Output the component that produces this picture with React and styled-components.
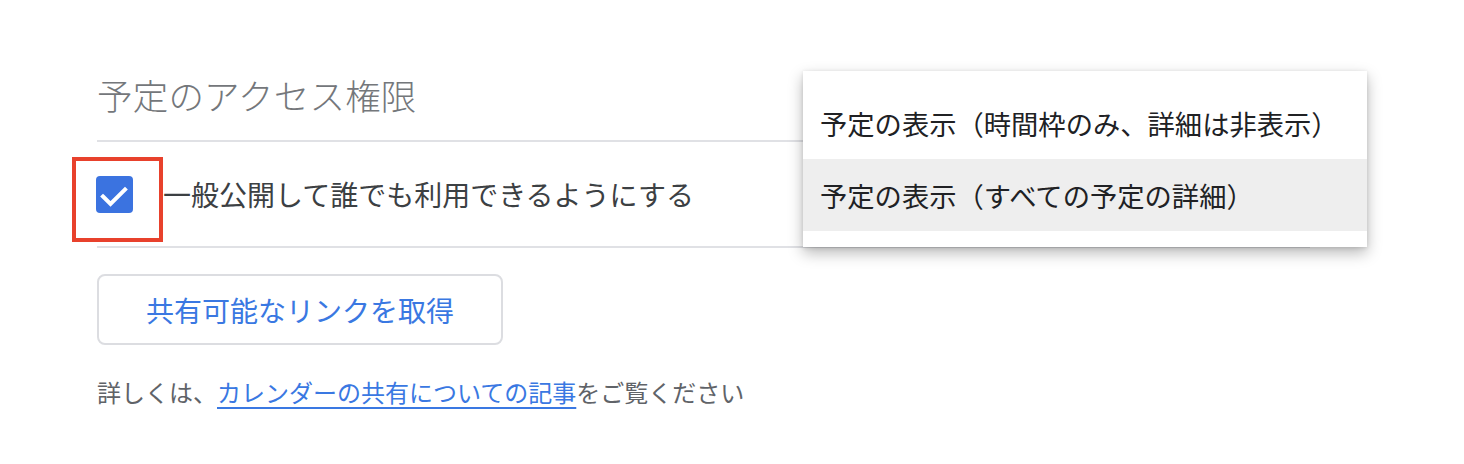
import styled, { createGlobalStyle } from "styled-components";

const GlobalStyle = createGlobalStyle`
    html, body {
        margin: 0;
        background: #ffffff;
    }
    body {
        font-family: "Noto Sans CJK JP", "Noto Sans", sans-serif;
    }
`

const Page = styled.div`
    position: relative;
    width: 1464px;
    height: 464px;
    padding-left: 97px;
    box-sizing: border-box;
    overflow: hidden;
`
const Section = styled.div`
    width: 1213px;
    display: flex;
    flex-direction: column;
`
const Heading = styled.h2`
    margin: 0;
    padding: 73px 0 23px;
    font-size: 35.5px;
    letter-spacing: 0.2px;
    line-height: 44px;
    font-weight: 300;
    color: #74777b;
    border-bottom: 2px solid #e0e1e5;
`
const Row = styled.label`
    display: flex;
    align-items: center;
    gap: 30px;
    height: 104px;
    border-bottom: 2px solid #e0e1e5;
    font-size: 28px;
    color: #3c4043;
`
const CheckWrap = styled.span`
    position: relative;
    display: flex;
    margin-left: -1px;
`
const Highlight = styled.span`
    position: absolute;
    left: -24px;
    top: -19px;
    width: 91px;
    height: 85px;
    box-sizing: border-box;
    border: 4px solid #e8412c;
`
const Box = styled.span`
    width: 37px;
    height: 37px;
    border-radius: 4px;
    background: #3b73e0;
    display: flex;
    align-items: center;
    justify-content: center;
`
const LinkButton = styled.button`
    margin-top: 26px;
    width: 406px;
    height: 71px;
    border: 2px solid #dcdde1;
    border-radius: 8px;
    background: #fff;
    font-family: inherit;
    font-size: 28px;
    color: #3a78e2;
    cursor: pointer;
`
const Note = styled.p`
    margin: 31px 0 0;
    font-size: 24px;
    line-height: 32px;
    color: #606368;
    & a {
        color: #3a78e2;
        text-decoration: underline;
        text-underline-offset: 5px;
        text-decoration-thickness: 2px;
    }
`
const Menu = styled.ul`
    position: absolute;
    left: 803px;
    top: 71px;
    width: 564px;
    margin: 0;
    padding: 16px 0;
    list-style: none;
    background: #fff;
    box-shadow: 0 6px 14px rgba(0, 0, 0, 0.28), 0 1px 4px rgba(0, 0, 0, 0.12);
`
const MenuItem = styled.li`
    height: 72px;
    display: flex;
    align-items: center;
    padding-left: 17px;
    font-size: 27.3px;
    color: #202124;
    background: ${p => (p.$active ? "#eeeeee" : "transparent")};
`

export default function App(){
    return(
    <>
        <GlobalStyle />
        <Page>
            <Section>
                <Heading>予定のアクセス権限</Heading>
                <Row>
                    <CheckWrap>
                        <Highlight />
                        <Box>
                            <svg width="37" height="37" viewBox="0 0 37 37">
                                <polyline points="7,20.5 14.5,28 29,13.5" fill="none" stroke="#fff" strokeWidth="4" strokeLinecap="square" />
                            </svg>
                        </Box>
                    </CheckWrap>
                    一般公開して誰でも利用できるようにする
                </Row>
                <div>
                    <LinkButton>共有可能なリンクを取得</LinkButton>
                </div>
                <Note>詳しくは、<a href="#">カレンダーの共有についての記事</a>をご覧ください</Note>
            </Section>
            <Menu>
                <MenuItem>予定の表示（時間枠のみ、詳細は非表示）</MenuItem>
                <MenuItem $active>予定の表示（すべての予定の詳細）</MenuItem>
            </Menu>
        </Page>
    </>
    )
}
